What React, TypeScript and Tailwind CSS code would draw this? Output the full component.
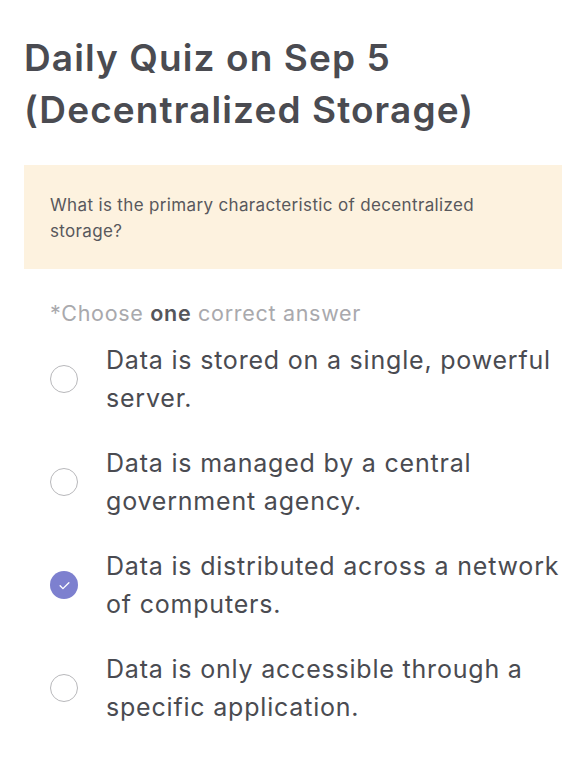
const options = [
  { text: 'Data is stored on a single, powerful server.', checked: false },
  { text: 'Data is managed by a central government agency.', checked: false },
  { text: 'Data is distributed across a network of computers.', checked: true },
  { text: 'Data is only accessible through a specific application.', checked: false },
];

function Radio({ checked }: { checked: boolean }) {
  if (checked) {
    return (
      <span className="flex h-[28px] w-[28px] shrink-0 items-center justify-center rounded-full bg-[#7d80cf]">
        <svg width="15" height="15" viewBox="0 0 24 24" fill="none" stroke="white" strokeWidth="2.2" strokeLinecap="round" strokeLinejoin="round">
          <path d="M5 12.5l4.5 4.5L19 7.5" />
        </svg>
      </span>
    );
  }
  return <span className="h-[28px] w-[28px] shrink-0 rounded-full border-[1.5px] border-[#b8b8bb] bg-white" />;
}

export default function App() {
  return (
    <div className="min-h-screen bg-white pl-[24px] pr-[18px] pt-[32px] text-[#4a4b51]" style={{ fontFamily: 'Inter, "Noto Sans", sans-serif' }}>
      <h1 className="text-[37px] font-semibold leading-[52px] tracking-[1.1px]">
        Daily Quiz on Sep 5 (Decentralized Storage)
      </h1>

      <div className="mt-[29px] bg-[#fdf2df] pb-[25px] pl-[26px] pr-[40px] pt-[27px]">
        <p className="text-[17px] leading-[26px] tracking-[0.35px] text-[#58585c]">
          What is the primary characteristic of decentralized storage?
        </p>
      </div>

      <p className="mt-[30px] pl-[26px] text-[21.5px] leading-[28px] tracking-[0.7px] text-[#a9a9ad]">
        *Choose <span className="font-semibold text-[#55565b]">one</span> correct answer
      </p>

      <div className="mt-[14px] flex flex-col gap-[27px] pl-[26px]">
        {options.map((o) => (
          <div key={o.text} className="flex items-center gap-[28px]">
            <Radio checked={o.checked} />
            <span className="text-[25px] leading-[38px] tracking-[0.8px]">{o.text}</span>
          </div>
        ))}
      </div>
    </div>
  );
}
